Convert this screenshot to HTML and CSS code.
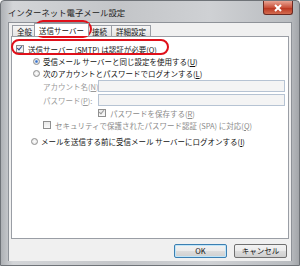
FILE: index.html
```html
<!doctype html>
<html>
<head>
    <meta charset="utf-8">
    <title>インターネット電子メール設定</title>
    <link rel="stylesheet" href="styles.css">
</head>
<body>
<div class="window">
    <div class="titlebar">
        <span class="title">インターネット電子メール設定</span>
        <span class="close">
            <svg width="10" height="8" viewBox="0 0 10 8"><path d="M2 1 L8 7 M8 1 L2 7" stroke="#fff" stroke-width="2"/></svg>
        </span>
    </div>
    <div class="client">
        <ul class="tabs">
            <li>全般</li>
            <li class="active">送信サーバー</li>
            <li>接続</li>
            <li>詳細設定</li>
        </ul>
        <div class="panel">
            <div class="row top"><span class="chk on"></span>送信サーバー (SMTP) は認証が必要(<u>O</u>)</div>
            <div class="row ind1"><span class="radio on"></span>受信メール サーバーと同じ設定を使用する(<u>U</u>)</div>
            <div class="row ind1"><span class="radio"></span>次のアカウントとパスワードでログオンする(<u>L</u>)</div>
            <div class="row field"><label>アカウント名(<u>N</u>):</label><span class="input"></span></div>
            <div class="row field"><label>パスワード(<u>P</u>):</label><span class="input"></span></div>
            <div class="row ind3 dim"><span class="chk on"></span>パスワードを保存する(<u>R</u>)</div>
            <div class="row ind2 dim"><span class="chk"></span>セキュリティで保護されたパスワード認証 (SPA) に対応(<u>Q</u>)</div>
            <div class="row ind0"><span class="radio"></span>メールを送信する前に受信メール サーバーにログオンする(<u>I</u>)</div>
        </div>
        <div class="buttons">
            <span class="btn default">OK</span>
            <span class="btn">キャンセル</span>
        </div>
    </div>
    <div class="mark tabmark"></div>
    <div class="mark rowmark"></div>
</div>
</body>
</html>
```

FILE: styles.css
```css
body {
    margin: 0;
    font-family: "Noto Sans CJK JP", "Noto Sans", sans-serif;
    font-size: 7.5px;
    color: #111;
}
.window {
    position: relative;
    width: 300px;
    height: 266px;
    box-sizing: border-box;
    border: 1px solid #6f7378;
    border-radius: 4px 4px 0 0;
    background: linear-gradient(90deg, #aeb1b5 0%, #d3d5d8 4%, #c3c5c8 40%, #cfd1d4 70%, #b9bcc0 97%, #a3a6aa 100%);
}
.titlebar {
    height: 21px;
    display: flex;
    justify-content: space-between;
    align-items: flex-start;
}
.title {
    font-size: 8.4px;
    color: #222;
    padding: 5px 0 0 7px;
}
.close {
    display: flex;
    align-items: center;
    justify-content: center;
    width: 28px;
    height: 13px;
    margin: 0 6px 0 0;
    border: 1px solid #6b2a22;
    border-top: none;
    border-radius: 0 0 3px 3px;
    background: linear-gradient(#e8a494, #c9523c 50%, #b8321d 51%, #d36b4f);
}
.client {
    margin: 0 7px 0 7px;
    height: 239px;
    background: #f0f0f0;
    border: 1px solid #8e9298;
    border-bottom: none;
    box-sizing: border-box;
    padding: 1px 2px 0 2px;
}
.tabs {
    display: flex;
    margin: 0;
    padding: 0 0 0 1px;
    list-style: none;
    height: 12px;
}
.tabs li {
    margin-top: 1px;
    padding: 0 4px;
    line-height: 11px;
    border: 1px solid #9a9ea5;
    border-bottom: none;
    margin-right: -1px;
    background: linear-gradient(#f6f6f6, #e4e4e4);
}
.tabs li.active {
    margin: -1px -2px 0 -2px;
    line-height: 13px;
    padding: 0 4px;
    background: #fff;
    position: relative;
    z-index: 1;
}
.panel {
    height: 203px;
    box-sizing: border-box;
    background: #fff;
    border: 1px solid #9a9ea5;
    padding-top: 6px;
}
.row {
    display: flex;
    align-items: center;
    height: 12px;
    white-space: nowrap;
}
.row.top { padding-left: 4px; }
.ind0 { padding-left: 19px; margin-top: 4px; }
.ind1 { padding-left: 21px; }
.ind2 { padding-left: 31px; }
.ind3 { padding-left: 86px; }
.dim { color: #8a8a8a; }
.chk {
    width: 6px;
    height: 6px;
    border: 1px solid #8f8f8f;
    background: linear-gradient(#e9e9e9, #fafafa);
    margin-right: 4px;
    position: relative;
}
.chk.on::after {
    content: "";
    position: absolute;
    left: 1px;
    top: -1px;
    width: 2px;
    height: 4px;
    border: solid #2b4b8a;
    border-width: 0 1.5px 1.5px 0;
    transform: rotate(40deg);
}
.dim .chk.on::after { border-color: #9a9a9a; }
.radio {
    width: 7px;
    height: 7px;
    border-radius: 50%;
    border: 1px solid #8f8f8f;
    background: radial-gradient(#ffffff, #dcdcdc);
    margin-right: 3px;
    box-sizing: border-box;
    position: relative;
}
.radio.on {
    background: radial-gradient(#3c6fc4 0, #6a9ae0 35%, #e6e6e6 45%);
}
.field {
    padding-left: 31px;
    height: 14px;
    color: #9a9a9a;
}
.field label { width: 55px; }
.input {
    width: 185px;
    height: 10px;
    border: 1px solid #b6c3d3;
    background: #f4f4f4;
}
.buttons {
    display: flex;
    justify-content: flex-end;
    gap: 7px;
    padding: 5px 2px 0 0;
}
.btn {
    width: 51px;
    height: 12px;
    line-height: 12px;
    text-align: center;
    border: 1px solid #707070;
    border-radius: 2px;
    background: linear-gradient(#f2f2f2, #ebebeb 50%, #dddddd 51%, #cfcfcf);
}
.btn.default {
    border-color: #3c7fb1;
    box-shadow: inset 0 0 0 1px #bfe5f9;
}
.mark {
    position: absolute;
    border: 2px solid #e0101a;
}
.tabmark {
    left: 33px;
    top: 19px;
    width: 54px;
    height: 14px;
    border-radius: 9px;
}
.rowmark {
    left: 10px;
    top: 38px;
    width: 154px;
    height: 12px;
    border-radius: 8px;
}
```
